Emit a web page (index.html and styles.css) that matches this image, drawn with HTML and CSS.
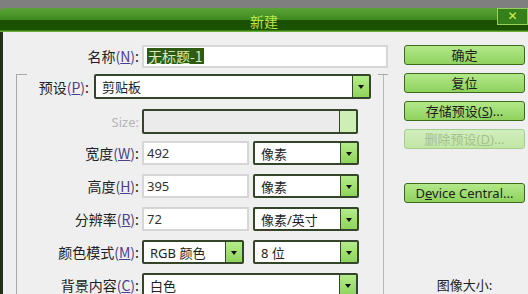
FILE: index.html
```html
<!DOCTYPE html>
<html lang="zh-CN">
<head>
    <meta charset="UTF-8">
    <title>新建</title>
    <link rel="stylesheet" href="styles.css">
</head>
<body>
    <div class="window">
        <div class="titlebar">
            <span class="title">新建</span>
            <span class="close">✕</span>
        </div>

        <div class="dialog">
            <div class="main">
                <div class="row">
                    <label class="label">名称<span class="key">(<u>N</u>)</span>:</label>
                    <div class="input wide"><span class="selected">无标题-1</span></div>
                </div>

                <div class="group">
                    <div class="row preset-row">
                        <label class="label short">预设<span class="key">(<u>P</u>)</span>:</label>
                        <div class="select preset"><span>剪贴板</span><i class="arrow"></i></div>
                    </div>

                    <div class="row size-row">
                        <label class="label disabled">Size:</label>
                        <div class="select size"><span></span><i class="arrow light"></i></div>
                    </div>

                    <div class="row">
                        <label class="label">宽度<span class="key">(<u>W</u>)</span>:</label>
                        <div class="input num">492</div>
                        <div class="select unit"><span>像素</span><i class="arrow"></i></div>
                    </div>

                    <div class="row">
                        <label class="label">高度<span class="key">(<u>H</u>)</span>:</label>
                        <div class="input num">395</div>
                        <div class="select unit"><span>像素</span><i class="arrow"></i></div>
                    </div>

                    <div class="row">
                        <label class="label">分辨率<span class="key">(<u>R</u>)</span>:</label>
                        <div class="input num">72</div>
                        <div class="select unit"><span>像素/英寸</span><i class="arrow"></i></div>
                    </div>

                    <div class="row">
                        <label class="label">颜色模式<span class="key">(<u>M</u>)</span>:</label>
                        <div class="select mode"><span>RGB 颜色</span><i class="arrow"></i></div>
                        <div class="select unit"><span>8 位</span><i class="arrow"></i></div>
                    </div>

                    <div class="row">
                        <label class="label">背景内容<span class="key">(<u>C</u>)</span>:</label>
                        <div class="select full"><span>白色</span><i class="arrow"></i></div>
                    </div>
                </div>
            </div>

            <div class="side">
                <button class="btn">确定</button>
                <button class="btn">复位</button>
                <button class="btn">存储预设(<u>S</u>)...</button>
                <button class="btn" disabled>删除预设(<u>D</u>)...</button>
                <button class="btn device">D<u>e</u>vice Central...</button>
                <p class="image-size">图像大小:</p>
            </div>
        </div>
    </div>
</body>
</html>
```

FILE: styles.css
```css
body {
    margin: 0;
    background-color: #7f7f7f;
    font-family: "Noto Sans", "Noto Sans CJK SC", sans-serif;
    font-size: 13px;
    color: #222;
}

.window {
    margin-top: 8px;
    height: 286px;
    overflow: hidden;
}

.titlebar {
    height: 24px;
    display: flex;
    justify-content: center;
    align-items: center;
    position: relative;
    border-radius: 4px 0 0 0;
    background: linear-gradient(#5aa436 0%, #3f8a20 50%, #1a5000 52%, #1b5300 92%, #6aac3a 96%, #6aac3a 100%);
}

.title {
    color: #bde64a;
    font-size: 14px;
    font-family: "Noto Sans CJK SC", sans-serif;
    margin-top: 1px;
}

.close {
    position: absolute;
    right: 0;
    top: 0;
    width: 29px;
    height: 15px;
    border: 1px solid #96d25a;
    background-color: #35801a;
    color: #d8f04a;
    font-family: "DejaVu Sans", sans-serif;
    font-size: 12px;
    font-weight: bold;
    text-align: center;
    line-height: 15px;
}

.dialog {
    display: flex;
    height: 262px;
    background-color: #efefef;
    border-left: 3px solid #23301a;
}

.main {
    width: 386px;
    padding-top: 12px;
}

.row {
    display: flex;
    align-items: center;
    height: 24px;
    margin-bottom: 9px;
}

.label {
    width: 136px;
    padding-right: 3px;
    text-align: right;
    white-space: nowrap;
    font-family: "Noto Sans CJK SC", sans-serif;
    font-size: 14px;
}

.key {
    color: #4c3f86;
}

.disabled {
    color: #b4b4b4;
    font-family: "Noto Sans", sans-serif;
    font-size: 13px;
}

.input {
    box-sizing: border-box;
    height: 24px;
    background: #fff;
    border: 2px solid #d6d6d6;
    padding: 0 3px;
    display: flex;
    align-items: center;
}

.wide {
    width: 246px;
    height: 23px;
}

.selected {
    background-color: #2f5c12;
    color: #d6ebc0;
    font-family: "Noto Sans CJK SC", sans-serif;
    font-size: 14px;
    padding: 0 1px;
    line-height: 16px;
}

.num {
    width: 107px;
    margin-right: 4px;
    color: #333;
}

.group {
    position: relative;
    margin-left: 13px;
    width: 366px;
    border-left: 1px solid #a8a8a8;
    border-right: 1px solid #b8b8b8;
    margin-top: 14px;
    height: 240px;
}

.group::before,
.group::after {
    content: "";
    position: absolute;
    top: 0;
    width: 10px;
    border-top: 1px solid #a8a8a8;
}

.group::before {
    left: 0;
}

.group::after {
    right: -5px;
}

.group .label {
    width: 122px;
}

.group .label.short {
    width: 72px;
    padding-right: 5px;
}

.preset-row {
    margin-top: -8px;
    height: 25px;
    margin-bottom: 10px;
}

.size-row {
    height: 25px;
    margin-bottom: 7px;
}

.select {
    box-sizing: border-box;
    height: 24px;
    display: flex;
    align-items: stretch;
    background: #fff;
    border: 2px solid #34452a;
    border-radius: 2px;
}

.select span {
    flex: 1;
    display: flex;
    align-items: center;
    padding-left: 6px;
    font-family: "Noto Sans", "Noto Sans CJK SC", sans-serif;
}

.arrow {
    width: 16px;
    border-left: 1px solid #34452a;
    background: linear-gradient(#b4ec8a, #8fd45c);
    position: relative;
}

.arrow::after {
    content: "";
    position: absolute;
    left: 5px;
    top: 9px;
    border-left: 3px solid transparent;
    border-right: 3px solid transparent;
    border-top: 4px solid #111;
}

.arrow.light {
    background: #cdeeb4;
}

.arrow.light::after {
    display: none;
}

.preset {
    width: 277px;
    height: 25px;
}

.size {
    width: 216px;
    height: 25px;
}

.size span {
    background-color: #ebebeb;
}

.unit {
    width: 106px;
}

.mode {
    width: 102px;
    margin-right: 9px;
}

.full {
    width: 216px;
}

.side {
    width: 121px;
    margin-left: 15px;
    padding-top: 13px;
    display: flex;
    flex-direction: column;
}

.btn {
    height: 21px;
    margin-bottom: 8px;
    border: 1px solid #3b6a1c;
    border-radius: 3px;
    background: linear-gradient(#b2e88a, #8fd25e);
    font-family: "Noto Sans", "Noto Sans CJK SC", sans-serif;
    font-size: 13px;
    color: #1e1e1e;
    padding: 0;
    line-height: 18px;
}

.btn:disabled {
    border-color: #a6cc8e;
    background: linear-gradient(#d2eebe, #c0e6a4);
    color: #a4c28e;
}

.device {
    margin-top: 26px;
}

.image-size {
    margin: 64px 0 0;
    text-align: center;
    font-family: "Noto Sans CJK SC", sans-serif;
    font-size: 13px;
}
```
